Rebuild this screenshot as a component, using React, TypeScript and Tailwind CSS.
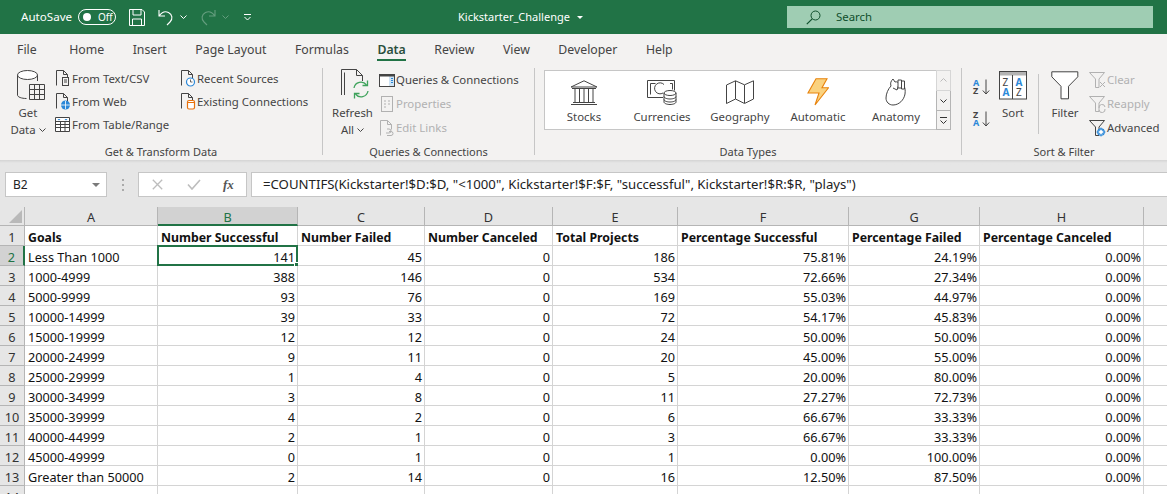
import type { ReactNode } from "react";

const rows = [
  ["Less Than 1000", "141", "45", "0", "186", "75.81%", "24.19%", "0.00%"],
  ["1000-4999", "388", "146", "0", "534", "72.66%", "27.34%", "0.00%"],
  ["5000-9999", "93", "76", "0", "169", "55.03%", "44.97%", "0.00%"],
  ["10000-14999", "39", "33", "0", "72", "54.17%", "45.83%", "0.00%"],
  ["15000-19999", "12", "12", "0", "24", "50.00%", "50.00%", "0.00%"],
  ["20000-24999", "9", "11", "0", "20", "45.00%", "55.00%", "0.00%"],
  ["25000-29999", "1", "4", "0", "5", "20.00%", "80.00%", "0.00%"],
  ["30000-34999", "3", "8", "0", "11", "27.27%", "72.73%", "0.00%"],
  ["35000-39999", "4", "2", "0", "6", "66.67%", "33.33%", "0.00%"],
  ["40000-44999", "2", "1", "0", "3", "66.67%", "33.33%", "0.00%"],
  ["45000-49999", "0", "1", "0", "1", "0.00%", "100.00%", "0.00%"],
  ["Greater than 50000", "2", "14", "0", "16", "12.50%", "87.50%", "0.00%"],
];

const headers = ["Goals", "Number Successful", "Number Failed", "Number Canceled", "Total Projects", "Percentage Successful", "Percentage Failed", "Percentage Canceled"];
const letters = ["A", "B", "C", "D", "E", "F", "G", "H", ""];
const gridCols = "grid grid-cols-[25px_133px_140px_127px_128px_125px_171px_131px_164px_23px]";
const tabs = ["File", "Home", "Insert", "Page Layout", "Formulas", "Data", "Review", "View", "Developer", "Help"];

function Svg({ w, h, children, className }: { w: number; h: number; children: ReactNode; className?: string }) {
  return (
    <svg width={w} height={h} viewBox={`0 0 ${w} ${h}`} fill="none" className={`shrink-0 ${className ?? ""}`}>
      {children}
    </svg>
  );
}

function Chevron({ color = "#444" }: { color?: string }) {
  return (
    <Svg w={7} h={4}>
      <path d="M.5.5 3.5 3.5 6.5.5" stroke={color} />
    </Svg>
  );
}

function Page({ children }: { children?: ReactNode }) {
  return (
    <Svg w={16} h={17}>
      <path d="M1.5 15.5V.5h7l4 4v11" stroke="#444" />
      <path d="M8.5.5v4h4" stroke="#444" />
      {children}
    </Svg>
  );
}

function SmallItem({ icon, label, disabled, className }: { icon: ReactNode; label: string; disabled?: boolean; className?: string }) {
  return (
    <div className={`flex items-center ${className ?? "h-[23px]"}`}>
      <div className="w-[17px] flex justify-center shrink-0">{icon}</div>
      <span className={`ml-[1px] whitespace-nowrap ${disabled ? "text-[#b1b1b1]" : "text-[#444]"}`}>{label}</span>
    </div>
  );
}

function LargeItem({ icon, label, second }: { icon: ReactNode; label: string; second?: string }) {
  return (
    <div className="flex flex-col items-center">
      <div className="h-[40px] flex items-center justify-center">{icon}</div>
      <span className="h-[16px] leading-[16px] text-[#444] whitespace-nowrap">{label}</span>
      {second && (
        <span className="h-[17px] pt-[1px] leading-[16px] text-[#444] flex items-center gap-[3px] whitespace-nowrap">
          {second}
          <Chevron />
        </span>
      )}
    </div>
  );
}

function Group({ width, label, children }: { width: string; label: string; children: ReactNode }) {
  return (
    <div className={`${width} shrink-0 h-full flex flex-col`}>
      <div className="flex-1 flex min-h-0">{children}</div>
      <div className="h-[16px] leading-[16px] text-center text-[#444] text-[11px]">{label}</div>
    </div>
  );
}

function Divider() {
  return <div className="w-px shrink-0 bg-[#c6c6c6] mt-[3px] mb-[5px]" />;
}

function GalleryItem({ icon, label }: { icon: ReactNode; label: string }) {
  return (
    <div className="w-[78px] flex flex-col items-center">
      <div className="h-[38px] pt-[4px] flex items-center justify-center">{icon}</div>
      <span className="leading-[16px] text-[#444]">{label}</span>
    </div>
  );
}

function FunnelIcon({ color, children }: { color: string; children?: ReactNode }) {
  return (
    <Svg w={17} h={18}>
      <path d="M.5 1.5h15L10 8v8.5H6.5V8z" stroke={color} fill="#f3f2f1" />
      {children}
    </Svg>
  );
}

function AzIcon({ flip }: { flip?: boolean }) {
  const top = flip ? "Z" : "A";
  const bottom = flip ? "A" : "Z";
  return (
    <div className="flex items-center w-[18px] h-[18px]">
      <div className="flex flex-col text-[9px] leading-[8px] font-bold w-[9px]">
        <span className={top === "A" ? "text-[#2b88d8]" : "text-[#444]"}>{top}</span>
        <span className={bottom === "A" ? "text-[#2b88d8]" : "text-[#444]"}>{bottom}</span>
      </div>
      <Svg w={8} h={16}>
        <path d="M4 .5v14.5M.8 11.5 4 15l3.2-3.5" stroke="#444" />
      </Svg>
    </div>
  );
}

export default function App() {
  return (
    <div className="w-[1167px] h-[494px] overflow-hidden bg-white font-['Noto_Sans','Open_Sans',sans-serif] text-[11.4px]">
      {/* Title bar */}
      <div className="h-[34px] bg-[#217346] flex items-center text-white">
        <span className="ml-[21px] w-[57px] text-[11.6px]">AutoSave</span>
        <div className="w-[38px] h-[16px] rounded-full border border-white flex items-center pl-[4px] gap-[7px] text-[10px]">
          <span className="w-[8px] h-[8px] rounded-full bg-white" />
          Off
        </div>
        <Svg w={16} h={17} className="ml-[13px]">
          <path d="M.5.5h12.5l2.5 2.5v13.5H.5z M4 .5v5.5h8V.5 M3.5 16.5v-6.5h9v6.5" stroke="#fff" />
        </Svg>
        <Svg w={16} h={17} className="ml-[13px]">
          <path d="M1 1v6h6M1.5 6.5C4 3 7.5 2 10.5 3.5c4 2 4.5 6.5 1.5 9.5l-3 3" stroke="#fff" strokeWidth="1.1" />
        </Svg>
        <div className="ml-[6px]"><Chevron color="#fff" /></div>
        <Svg w={16} h={17} className="ml-[13px] opacity-30">
          <path d="M15 1v6H9M14.500 6.500C12 3 8.500 2 5.500 3.500c-4 2-4.500 6.500-1.500 9.500l3 3" stroke="#fff" strokeWidth="1.1" />
        </Svg>
        <div className="ml-[6px] opacity-30"><Chevron color="#fff" /></div>
        <Svg w={7} h={7} className="ml-[15px]">
          <path d="M0 .5h7M.5 3 3.500 6 6.500 3" stroke="#fff" />
        </Svg>
        <span className="ml-[207px] w-[119px] text-[11px] whitespace-nowrap">Kickstarter_Challenge</span>
        <svg width="6" height="3" viewBox="0 0 6 3" className="shrink-0"><path d="M0 0h6L3 3z" fill="#fff" /></svg>
        <div className="ml-[204px] w-[366px] h-[22px] bg-[#9fcdb3] flex items-center text-[#0f4f2c]">
          <Svg w={15} h={15} className="ml-[19px]">
            <circle cx="9.500" cy="5.500" r="4.500" stroke="#0f4f2c" />
            <path d="M6.200 8.800.8 14.200" stroke="#0f4f2c" strokeWidth="1.2" />
          </Svg>
          <span className="ml-[15px]">Search</span>
        </div>
      </div>

      {/* Tabs */}
      <div className="h-[31px] pt-[1px] bg-[#f3f2f1] flex items-center text-[12.3px] text-[#444] pl-[17px] gap-[28.5px]">
        {tabs.map((t) => (
          <div
            key={t}
            className={`relative h-full flex items-center whitespace-nowrap ${t === "Data" ? "font-semibold text-[#2a4f3c]" : ""} ${t === "File" ? "mr-[4px]" : ""}`}
          >
            {t}
            {t === "Data" && <span className="absolute left-0 right-0 bottom-[4px] h-[2px] bg-[#217346]" />}
          </div>
        ))}
      </div>

      {/* Ribbon */}
      <div className="h-[95px] bg-[#f3f2f1] flex">
        <Group width="w-[322px]" label="Get & Transform Data">
          <div className="w-[54px] flex justify-center pl-[2px]">
            <LargeItem
              label="Get"
              second="Data"
              icon={
                <Svg w={28} h={31} className="translate-x-[3px]">
                  <path d="M.5 5v20c0 2 4 3.500 9 3.500M20.500 5v6" stroke="#444" />
                  <ellipse cx="10.500" cy="5" rx="10" ry="4.500" stroke="#444" fill="#fff" />
                  <path d="M12.500 14.500h15v15h-15zM12.500 19.500h15M12.500 24.500h15M17.500 14.500v15M22.500 14.500v15" stroke="#444" fill="#f3f2f1" />
                </Svg>
              }
            />
          </div>
          <div className="w-[125px] pt-[2px]">
            <SmallItem
              label="From Text/CSV"
              icon={
                <Page>
                  <rect x="7.500" y="7.500" width="6" height="8" stroke="#444" fill="#f3f2f1" />
                  <path d="M9 10h3M9 12h3" stroke="#444" />
                </Page>
              }
            />
            <SmallItem
              label="From Web"
              icon={
                <Page>
                  <circle cx="10.500" cy="12" r="4.500" fill="#2b88d8" />
                  <path d="M6 12h9M10.500 8v8" stroke="#fff" strokeWidth=".8" />
                </Page>
              }
            />
            <SmallItem
              label="From Table/Range"
              icon={
                <Svg w={15} h={15}>
                  <path d="M.5.500h14v14H.5z" stroke="#444" fill="#fff" />
                  <path d="M0 4.500h15M0 7.500h15M0 10.500h15M5.500 5v10M10 5v10" stroke="#444" />
                  <path d="M2.500 2h3l-1.500 1.500zM9.500 2h3L11 3.500z" fill="#2b88d8" />
                </Svg>
              }
            />
          </div>
          <div className="pt-[2px]">
            <SmallItem
              label="Recent Sources"
              icon={
                <Page>
                  <circle cx="10.500" cy="12" r="4" stroke="#2b88d8" fill="#fff" strokeWidth="1.200" />
                  <path d="M10.500 9.500V12h2" stroke="#444" strokeWidth=".8" />
                </Page>
              }
            />
            <SmallItem
              label="Existing Connections"
              icon={
                <Page>
                  <rect x="7.500" y="7.500" width="7" height="8.500" rx="1.500" stroke="#e8710a" fill="#fff" strokeWidth="1.200" />
                  <path d="M7.500 9.500h7" stroke="#e8710a" />
                </Page>
              }
            />
          </div>
        </Group>
        <Divider />
        <Group width="w-[211px]" label="Queries & Connections">
          <div className="w-[56px] flex justify-center pl-[3px]">
            <LargeItem
              label="Refresh"
              second="All"
              icon={
                <Svg w={28} h={32} className="translate-x-[3px]">
                  <path d="M.5 26V.5h15l6 6V12" stroke="#444" fill="#f3f2f1" />
                  <path d="M15.500.5v6h6" stroke="#444" />
                  <path d="M3.500 26V3.500" stroke="#444" />
                  <path d="M13 19a7 7 0 0 1 12.500-3M27 22a7 7 0 0 1-12.500 3" stroke="#3fa35c" strokeWidth="1.300" />
                  <path d="M26.500 11.500v5h-5M13.500 29.500v-5h5" stroke="#3fa35c" strokeWidth="1.300" />
                </Svg>
              }
            />
          </div>
          <div className="pt-[3px] -ml-px">
            <SmallItem
              className="h-[24px]"
              label="Queries & Connections"
              icon={
                <Svg w={16} h={13}>
                  <rect x=".5" y=".5" width="15" height="12" stroke="#444" fill="#fff" />
                  <rect x="10" y="2" width="5" height="10" fill="#cfe4f5" />
                  <path d="M.5 1.500h15" stroke="#444" strokeWidth="2" />
                  <path d="M12 4.500h2M12 6.500h2M12 8.500h2" stroke="#2b88d8" />
                </Svg>
              }
            />
            <SmallItem
              className="h-[24px]"
              disabled
              label="Properties"
              icon={
                <Svg w={12} h={16}>
                  <rect x=".5" y=".5" width="11" height="15" stroke="#b1b1b1" />
                  <path d="M3 5h2M7 5h2M3 8h2M7 8h2M3 11h2" stroke="#b1b1b1" />
                </Svg>
              }
            />
            <SmallItem
              className="h-[24px]"
              disabled
              label="Edit Links"
              icon={
                <Svg w={14} h={16}>
                  <path d="M.5 15.500V.5h7l4 4v5M7.500.5v4h4" stroke="#b1b1b1" />
                  <path d="M6 13h3a2 2 0 0 0 0-4H7M7 15.500h4a2 2 0 0 0 0-4H9" stroke="#b1b1b1" />
                </Svg>
              }
            />
          </div>
        </Group>
        <Divider />
        <Group width="w-[426px]" label="Data Types">
          <div className="ml-[9px] mt-[5px] w-[407px] h-[60px] flex border border-[#c6c6c6] bg-white border-r-0">
            <div className="flex flex-1">
              <GalleryItem
                label="Stocks"
                icon={
                  <Svg w={28} h={25}>
                    <path d="M14 .8 1 7h26zM2 8.500h24M3 22.500h22M1 24.500h26" stroke="#444" />
                    <path d="M5 9v13M9.500 9v13M14 9v13M18.500 9v13M23 9v13" stroke="#444" />
                  </Svg>
                }
              />
              <GalleryItem
                label="Currencies"
                icon={
                  <Svg w={30} h={25}>
                    <path d="M16 17.500H.5V.5h27v10" stroke="#444" />
                    <path d="M3.500 14.500v-11h5M23 3.500h2.500v6" stroke="#444" />
                    <path d="M16 13a5.500 5.500 0 1 1 1-8.500" stroke="#444" />
                    <ellipse cx="23" cy="13" rx="6" ry="2.500" stroke="#444" fill="#fff" />
                    <path d="M17 13v9c0 1.500 3 2.500 6 2.500s6-1 6-2.500v-9M17 16.500c0 1.500 3 2.500 6 2.500s6-1 6-2.500M17 19.500c0 1.500 3 2.500 6 2.500s6-1 6-2.500" stroke="#444" />
                  </Svg>
                }
              />
              <GalleryItem
                label="Geography"
                icon={
                  <Svg w={28} h={24}>
                    <path d="M.5 5 9.500.8l9 4 9-4V19l-9 4.500-9-4.500-9 4.500zM9.500 1v18M18.500 5v18" stroke="#444" />
                  </Svg>
                }
              />
              <GalleryItem
                label="Automatic"
                icon={
                  <Svg w={22} h={28}>
                    <path d="M9 .8h11l-5 9h6.500L8 27l4-12H1z" stroke="#e8830c" fill="#fad27f" strokeWidth="1.100" />
                  </Svg>
                }
              />
              <GalleryItem
                label="Anatomy"
                icon={
                  <Svg w={22} h={28}>
                    <path d="M6 8c-3 3-5 8-5 12 0 4 3 7 7 7 6 0 11-5 12-11 .5-4 0-6-1-8M6 8C5 5 6 3 8 1l2 3M10 4c2-.5 3 0 4 2l-2 6-4-2" stroke="#444" />
                    <path d="M13 2h3.500v8H13zM16.500 3h3v8h-3z" stroke="#444" fill="#fff" />
                  </Svg>
                }
              />
            </div>
            <div className="w-[15px] -mt-px -mb-px shrink-0 flex flex-col">
              <div className="h-[21px] border border-[#d6d6d6] bg-[#f3f2f1] flex items-center justify-center rotate-180">
                <Chevron color="#bbb" />
              </div>
              <div className="h-[19px] border-x border-[#b5b5b5] bg-[#f3f2f1] flex items-center justify-center">
                <Chevron color="#333" />
              </div>
              <div className="h-[20px] border border-[#b5b5b5] bg-[#f3f2f1] flex flex-col gap-[2px] items-center justify-center">
                <span className="w-[7px] h-px bg-[#333]" />
                <Chevron color="#333" />
              </div>
            </div>
          </div>
        </Group>
        <Divider />
        <Group width="w-[204px]" label="Sort & Filter">
          <div className="flex flex-1">
            <div className="w-[37px] pl-[11px] pt-[13px] flex flex-col gap-[14px]">
              <AzIcon />
              <AzIcon flip />
            </div>
            <div className="w-[28px]">
              <LargeItem
                label="Sort"
                icon={
                  <Svg w={28} h={29}>
                    <rect x=".5" y=".5" width="27" height="27.500" stroke="#444" fill="#fff" />
                    <rect x="1" y="1" width="26" height="3.500" fill="#b3b3b3" />
                    <path d="M13.500 4v24" stroke="#444" />
                    <text x="3.500" y="15" fontSize="10" fill="#444">Z</text>
                    <text x="3.500" y="25" fontSize="10" fontWeight="bold" fill="#2b88d8">A</text>
                    <text x="16.500" y="15" fontSize="10" fontWeight="bold" fill="#2b88d8">A</text>
                    <text x="17" y="25" fontSize="10" fill="#444">Z</text>
                  </Svg>
                }
              />
            </div>
            <div className="w-px h-[60px] bg-[#c6c6c6] mt-[9px] ml-[11px]" />
            <div className="w-[52px] flex justify-center">
              <LargeItem
                label="Filter"
                icon={
                  <Svg w={28} h={29}>
                    <path d="M.8.800h26v5l-9.300 9.500v12.500h-7.500V15.300L.8 5.800z" stroke="#444" fill="#fff" />
                  </Svg>
                }
              />
            </div>
            <div className="pt-[3px] -ml-[2px]">
              <SmallItem
                className="h-[24px]"
                disabled
                label="Clear"
                icon={
                  <FunnelIcon color="#b1b1b1">
                    <path d="M11 11l5 5M16 11l-5 5" stroke="#b1b1b1" />
                  </FunnelIcon>
                }
              />
              <SmallItem
                className="h-[24px]"
                disabled
                label="Reapply"
                icon={
                  <FunnelIcon color="#b1b1b1">
                    <path d="M10 13a3 3 0 0 1 6-1M16 14a3 3 0 0 1-6 1" stroke="#b1b1b1" />
                  </FunnelIcon>
                }
              />
              <SmallItem
                className="h-[24px]"
                label="Advanced"
                icon={
                  <FunnelIcon color="#444">
                    <circle cx="12" cy="13" r="3.200" stroke="#2b88d8" strokeWidth="1.300" fill="#fff" />
                    <path d="M12 8.500v9M7.500 13h9M9 10l6 6M15 10l-6 6" stroke="#2b88d8" strokeWidth=".9" />
                    <circle cx="12" cy="13" r="1.800" fill="#fff" />
                  </FunnelIcon>
                }
              />
            </div>
          </div>
        </Group>
      </div>

      {/* Formula bar */}
      <div className="h-[47px] bg-[#e6e6e6] bg-gradient-to-b from-[#d4d4d4] via-[#e6e6e6] to-[#e6e6e6] bg-[length:100%_6px] bg-no-repeat flex items-start pt-[12px] pl-[5px]">
        <div className="w-[102px] h-[25px] bg-white border border-[#c6c6c6] flex items-center justify-between pl-[7px] pr-[6px] text-[#222] text-[12px]">
          <span className="pt-[1px]">B2</span>
          <svg width="8" height="4" viewBox="0 0 8 4"><path d="M0 0h8L4 4z" fill="#7a7a7a" /></svg>
        </div>
        <div className="w-[31px] h-[25px] flex flex-col items-center justify-center gap-[3px] shrink-0">
          {[0, 1, 2].map((i) => (
            <span key={i} className="w-[2px] h-[2px] bg-[#aaa]" />
          ))}
        </div>
        <div className="w-[109px] h-[25px] bg-white border border-[#c6c6c6] flex items-center pl-[13px]">
          <Svg w={11} h={11}>
            <path d="M.8.8l9.400 9.400M10.200.8.8 10.200" stroke="#bdbdbd" strokeWidth="1.300" />
          </Svg>
          <Svg w={14} h={11} className="ml-[24px]">
            <path d="M1 5.500 5 10 13 1" stroke="#bdbdbd" strokeWidth="1.600" />
          </Svg>
          <span className="ml-[22px] text-[#555] italic font-['Liberation_Serif',serif] text-[13px] font-bold">fx</span>
        </div>
        <div className="ml-[4px] flex-1 h-[25px] bg-white border border-[#c6c6c6] border-r-0 flex items-center pl-[11px] text-[#222] text-[13.2px] whitespace-nowrap">
          <span>{'=COUNTIFS(Kickstarter!$D:$D, "<1000", Kickstarter!$F:$F, "successful", Kickstarter!$R:$R, "plays")'}</span>
        </div>
      </div>

      {/* Sheet */}
      <div className={`${gridCols} text-[12.7px] leading-[16px] text-[#111]`}>
        <div className="h-[19px] bg-[#e6e6e6] border-r border-b border-[#b5b5b5] flex items-end justify-end pr-[2px] pb-[2px]">
          <svg width="13" height="13" viewBox="0 0 13 13"><path d="M13 0v13H0z" fill="#b9b9b9" /></svg>
        </div>
        {letters.map((l, i) => (
          <div
            key={i}
            className={`h-[19px] pt-[2px] flex items-center justify-center ${
              i === 8 ? "bg-[#e6e6e6] border-b border-[#b5b5b5]" : ""
            } ${
              l === "B"
                ? "bg-[#d2d2d2] border-r border-[#b5b5b5] border-b-2 border-b-[#217346] text-[#217346]"
                : i < 8
                  ? "bg-[#e6e6e6] border-r border-b border-[#b5b5b5] text-[#333]"
                  : ""
            }`}
          >
            {l}
          </div>
        ))}

        <RowHead label="1" />
        {headers.map((h) => (
          <div key={h} className="h-[20px] pt-[5px] px-[3px] text-[12.3px] font-bold flex items-center border-r border-b border-[#d4d4d4] whitespace-nowrap overflow-hidden">
            {h}
          </div>
        ))}
        <div className="h-[20px] border-b border-[#d4d4d4]" />

        {rows.map((row, r) => (
          <RowCells key={r} row={row} num={r + 2} />
        ))}

        <RowHead label="14" />
        {letters.map((_, i) => (
          <div key={i} className={`h-[20px] border-[#d4d4d4] ${i < 8 ? "border-r" : ""}`} />
        ))}
      </div>
    </div>
  );
}

function RowHead({ label, active }: { label: string; active?: boolean }) {
  return (
    <div
      className={`h-[20px] pt-[3px] flex items-center justify-center border-b border-[#b5b5b5] text-[#333] ${
        active ? "bg-[#d2d2d2] border-r-2 border-r-[#217346] text-[#217346]" : "bg-[#e6e6e6] border-r"
      }`}
    >
      {label}
    </div>
  );
}

function RowCells({ row, num }: { row: string[]; num: number }) {
  return (
    <>
      <RowHead label={String(num)} active={num === 2} />
      {row.map((v, i) => (
        <div
          key={i}
          className={`relative h-[20px] pt-[3px] pl-[3px] pr-[2px] flex items-center border-r border-b border-[#d4d4d4] whitespace-nowrap ${i > 0 ? "justify-end" : ""}`}
        >
          {v}
          {num === 2 && i === 1 && (
            <span className="absolute -left-px -top-px -right-px -bottom-px border-2 border-[#217346]">
              <span className="absolute -right-[3px] -bottom-[3px] w-[5px] h-[5px] bg-[#217346] border border-white" />
            </span>
          )}
        </div>
      ))}
      <div className="h-[20px] border-b border-[#d4d4d4]" />
    </>
  );
}
